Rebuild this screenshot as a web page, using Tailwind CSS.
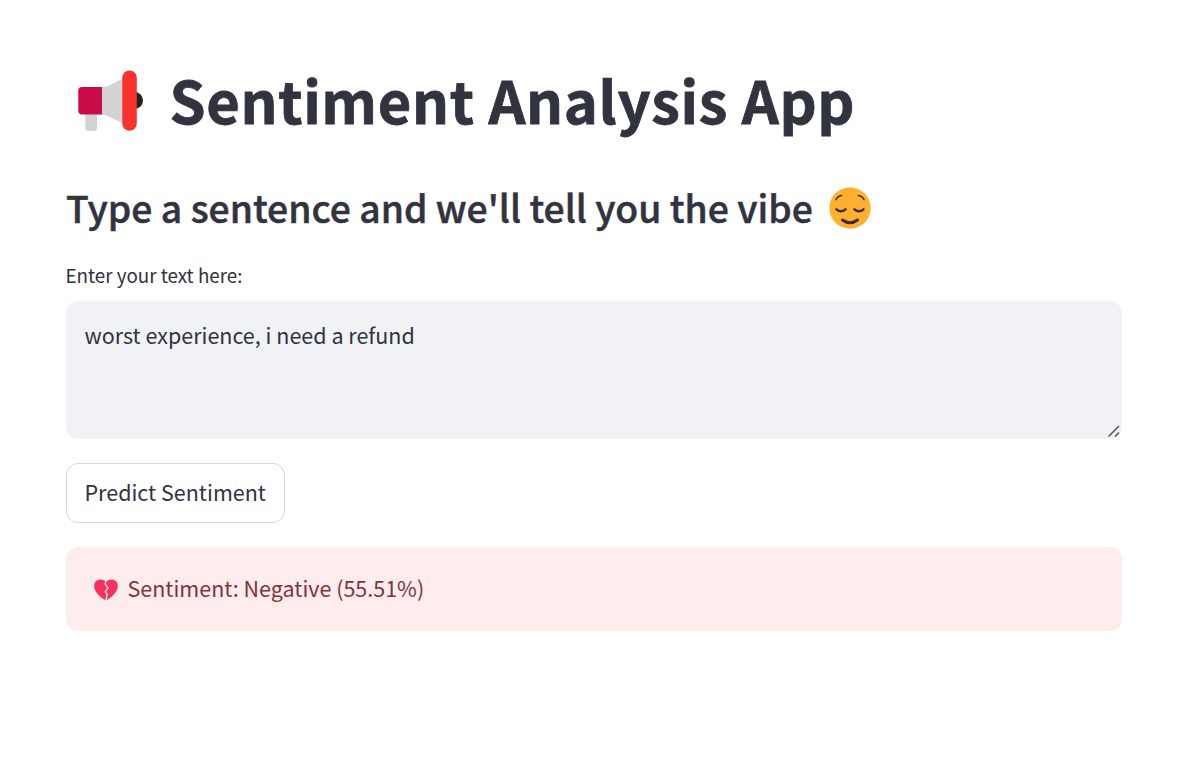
<!DOCTYPE html>
<html lang="en">
<head>
<meta charset="utf-8">
<title>Sentiment Analysis App</title>
<script src="https://cdn.jsdelivr.net/npm/@tailwindcss/browser@4"></script>
</head>
<body class="bg-white text-[#31333f] font-['Noto_Sans_CJK_SC','Source_Sans_Pro',sans-serif] overflow-hidden">
<main class="w-[1122px] pl-[66px] pt-[58px] flex flex-col items-start">
  <h1 class="flex items-center h-20 text-[57.8px] leading-20 font-bold whitespace-nowrap">
    <svg class="w-[66px] h-[62px] ml-[12px] mr-[25.5px] mt-[5px] shrink-0" viewBox="78 70 66 62">
      <path d="M85.300 112h11.700v16a3 3 0 0 1-3 3h-5.700a3 3 0 0 1-3-3z" fill="#d3d3d3"/>
      <path d="M101 87h3q3 0 7-2.500l13-6.500v46l-13-6.500q-4-2.500-7-2.500h-3z" fill="#d3d3d3"/>
      <path d="M102 87v27.500H82a3.700 3.700 0 0 1-3.700-3.700V90.700A3.700 3.700 0 0 1 82 87z" fill="#c90c48"/>
      <path d="M134.500 92a8.500 8.500 0 0 1 0 17z" fill="#212121"/>
      <rect x="122.300" y="70.500" width="14.500" height="60.300" rx="7.250" fill="#f9312f"/>
    </svg>
    <span class="mt-[2px] tracking-[0.65px] [-webkit-text-stroke:0.8px_#31333f]">Sentiment Analysis App</span>
  </h1>
  <h2 class="flex items-center mt-11 h-[50px] text-[37.3px] leading-[50px] font-medium whitespace-nowrap">
    <span class="[-webkit-text-stroke:0.5px_#31333f]">Type a sentence and we'll tell you the vibe</span>
    <svg class="w-[42px] h-[42px] ml-[16px] mt-[1px] shrink-0" viewBox="0 0 42 42" fill="none" stroke="#402a32" stroke-linecap="round">
      <circle cx="21" cy="21" r="20.700" fill="#ffb02e" stroke="none"/>
      <path d="M6.900 12.800Q8.500 8.800 12.700 8.400M35 12.800Q33.400 8.800 29.200 8.400" stroke-width="1.500"/>
      <path d="M7.500 22.400q4.500 3.800 9 0M25.500 22.400q4.500 3.800 9 0" stroke-width="2.500"/>
      <path d="M13.500 33q7.500 5.500 15 0" stroke-width="3"/>
    </svg>
  </h2>
  <label class="mt-7 h-[30px] leading-[30px] text-[18.8px] -ml-[0.5px] whitespace-nowrap"><span>Enter your text here:</span></label>
  <div class="relative mt-[11px] w-full h-[138px] rounded-xl bg-[#f0f2f6] pl-[18.5px] pt-[16px] text-[21.5px] leading-9 whitespace-nowrap">
    <span>worst experience, i need a refund</span>
    <svg class="absolute right-[2px] bottom-[2px] w-3 h-3" viewBox="0 0 12 12" stroke="#505257" stroke-width="1.500" fill="none"><path d="M.5 11.500l10.500-10.500M7 11.500l4-4"/></svg>
  </div>
  <button class="mt-6 w-[219px] h-[60px] rounded-xl border border-[#d6d6d9] bg-white pl-[17.5px] pb-[2px] text-left text-[21.5px] leading-[54px] whitespace-nowrap"><span>Predict Sentiment</span></button>
  <div class="mt-6 w-full h-[84px] rounded-xl bg-[#ffecec] pl-7 flex items-center text-[#7d353b] text-[21.5px] leading-[36px] whitespace-nowrap">
    <svg class="w-6 h-[22px] mr-[9.5px] mt-[2px] shrink-0" viewBox="0 0 24 22">
      <path d="M11.700 2.800C8.500-1 .2-.4.2 7.200c0 5.800 6.800 11.300 10.800 13.900.7.400 1.300.4 2 0 4-2.600 10.800-8.100 10.800-13.900 0-7.600-8.300-8.200-11.500-4.400z" fill="#f92f60"/>
      <path d="M12 1.500l-.8 3.500 2.600 3.800-2.500 4 2 2.700-1.500 6" fill="none" stroke="#ffecec" stroke-width="1.300"/>
    </svg>
    <span class="-mt-[3px]">Sentiment: Negative (55.51%)</span>
  </div>
</main>
</body>
</html>
